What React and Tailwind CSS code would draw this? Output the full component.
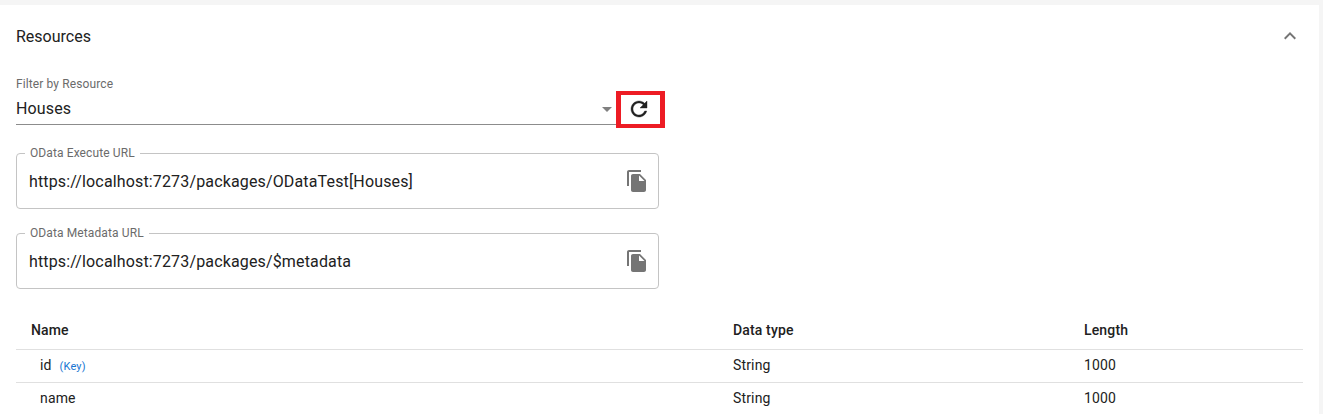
const FONT = { fontFamily: "Roboto, sans-serif" };

const REFRESH =
  "M17.65 6.35C16.2 4.9 14.21 4 12 4c-4.42 0-7.99 3.58-7.99 8s3.57 8 7.99 8c3.73 0 6.84-2.55 7.73-6h-2.08c-.82 2.33-3.04 4-5.65 4-3.31 0-6-2.69-6-6s2.69-6 6-6c1.66 0 3.14.69 4.22 1.78L13 11h7V4l-2.35 2.35z";
const FILE_COPY =
  "M16 1H4c-1.1 0-2 .9-2 2v14h2V3h12V1zm-1 4 6 6v10c0 1.1-.9 2-2 2H7.99C6.89 23 6 22.1 6 21l.01-14c0-1.1.89-2 1.99-2h7zm-1 7h5.5L14 6.5V12z";
const EXPAND_LESS = "m12 8-6 6 1.41 1.41L12 10.83l4.59 4.58L18 14z";

function Icon({ d, className, ...rest }) {
  return (
    <svg viewBox="0 0 24 24" fill="currentColor" className={className} {...rest}>
      <path d={d} />
    </svg>
  );
}

function UrlField({ label, value }) {
  return (
    <div className="relative flex h-14 w-[643px] items-center justify-between rounded border border-[#c4c4c4] pl-[12px] pr-[9px]">
      <span className="absolute -top-[8px] left-[8px] bg-white px-[5px] text-xs leading-[15px] tracking-[0.11px] text-[#6b6b6b]">
        {label}
      </span>
      <span className="pt-[2px] text-base tracking-[0.15px] text-[#212121]">{value}</span>
      <Icon d={FILE_COPY} className="h-6 w-6 text-[#757575]" />
    </div>
  );
}

function Row({ name, isKey }) {
  return (
    <div className="flex h-[33px] items-center border-b border-[#e0e0e0] pb-[2px] text-sm tracking-[0.15px] text-[#212121]">
      <div className="w-[717px] pl-[24px]">
        {name}
        {isKey && <span className="ml-[8px] text-[11px] text-[#1976d2]">(Key)</span>}
      </div>
      <div className="w-[351px]">String</div>
      <div>1000</div>
    </div>
  );
}

export default function App() {
  return (
    <div style={FONT} className="h-[414px] w-[1323px] overflow-hidden bg-[#f5f5f5] pt-[5px]">
      <div className="h-[409px] w-[1319px] bg-white px-4">
        <div className="flex h-[62px] items-center justify-between">
          <span className="pt-[2px] text-base text-[#212121]">Resources</span>
          <Icon d={EXPAND_LESS} className="mr-[1px] h-6 w-6 text-[#757575]" />
        </div>

        <div className="flex items-start">
          <div className="relative mt-[9px] h-[49px] w-[600px] border-b border-[#8c8c8c]">
            <div className="pt-[1px] text-xs leading-[15px] tracking-[0.11px] text-[#6b6b6b]">Filter by Resource</div>
            <div className="mt-[5px] text-base leading-[24px] tracking-[0.15px] text-[#212121]">Houses</div>
            <div className="absolute right-[4px] top-[31px] h-0 w-0 border-x-[5px] border-t-[5px] border-x-transparent border-t-[#808080]" />
          </div>
          <div className="mt-[24px] flex h-[37px] w-[49px] items-center justify-center border-x-[5px] border-y-4 border-[#ed1c24] pb-[2px] pr-[3px]">
            <Icon d={REFRESH} stroke="currentColor" strokeWidth="0.4" className="h-6 w-6 text-[#212121]" />
          </div>
        </div>

        <div className="mt-[25px] flex flex-col gap-6">
          <UrlField label="OData Execute URL" value="https://localhost:7273/packages/ODataTest[Houses]" />
          <UrlField label="OData Metadata URL" value="https://localhost:7273/packages/$metadata" />
        </div>

        <div className="mt-[24px] w-[1287px]">
          <div className="flex h-[37px] items-center border-b border-[#e0e0e0] pb-[3px] text-sm font-medium tracking-[0.15px] text-[#212121]">
            <div className="w-[717px] pl-[15px]">Name</div>
            <div className="w-[351px]">Data type</div>
            <div>Length</div>
          </div>
          <Row name="id" isKey />
          <Row name="name" />
        </div>
      </div>
    </div>
  );
}
